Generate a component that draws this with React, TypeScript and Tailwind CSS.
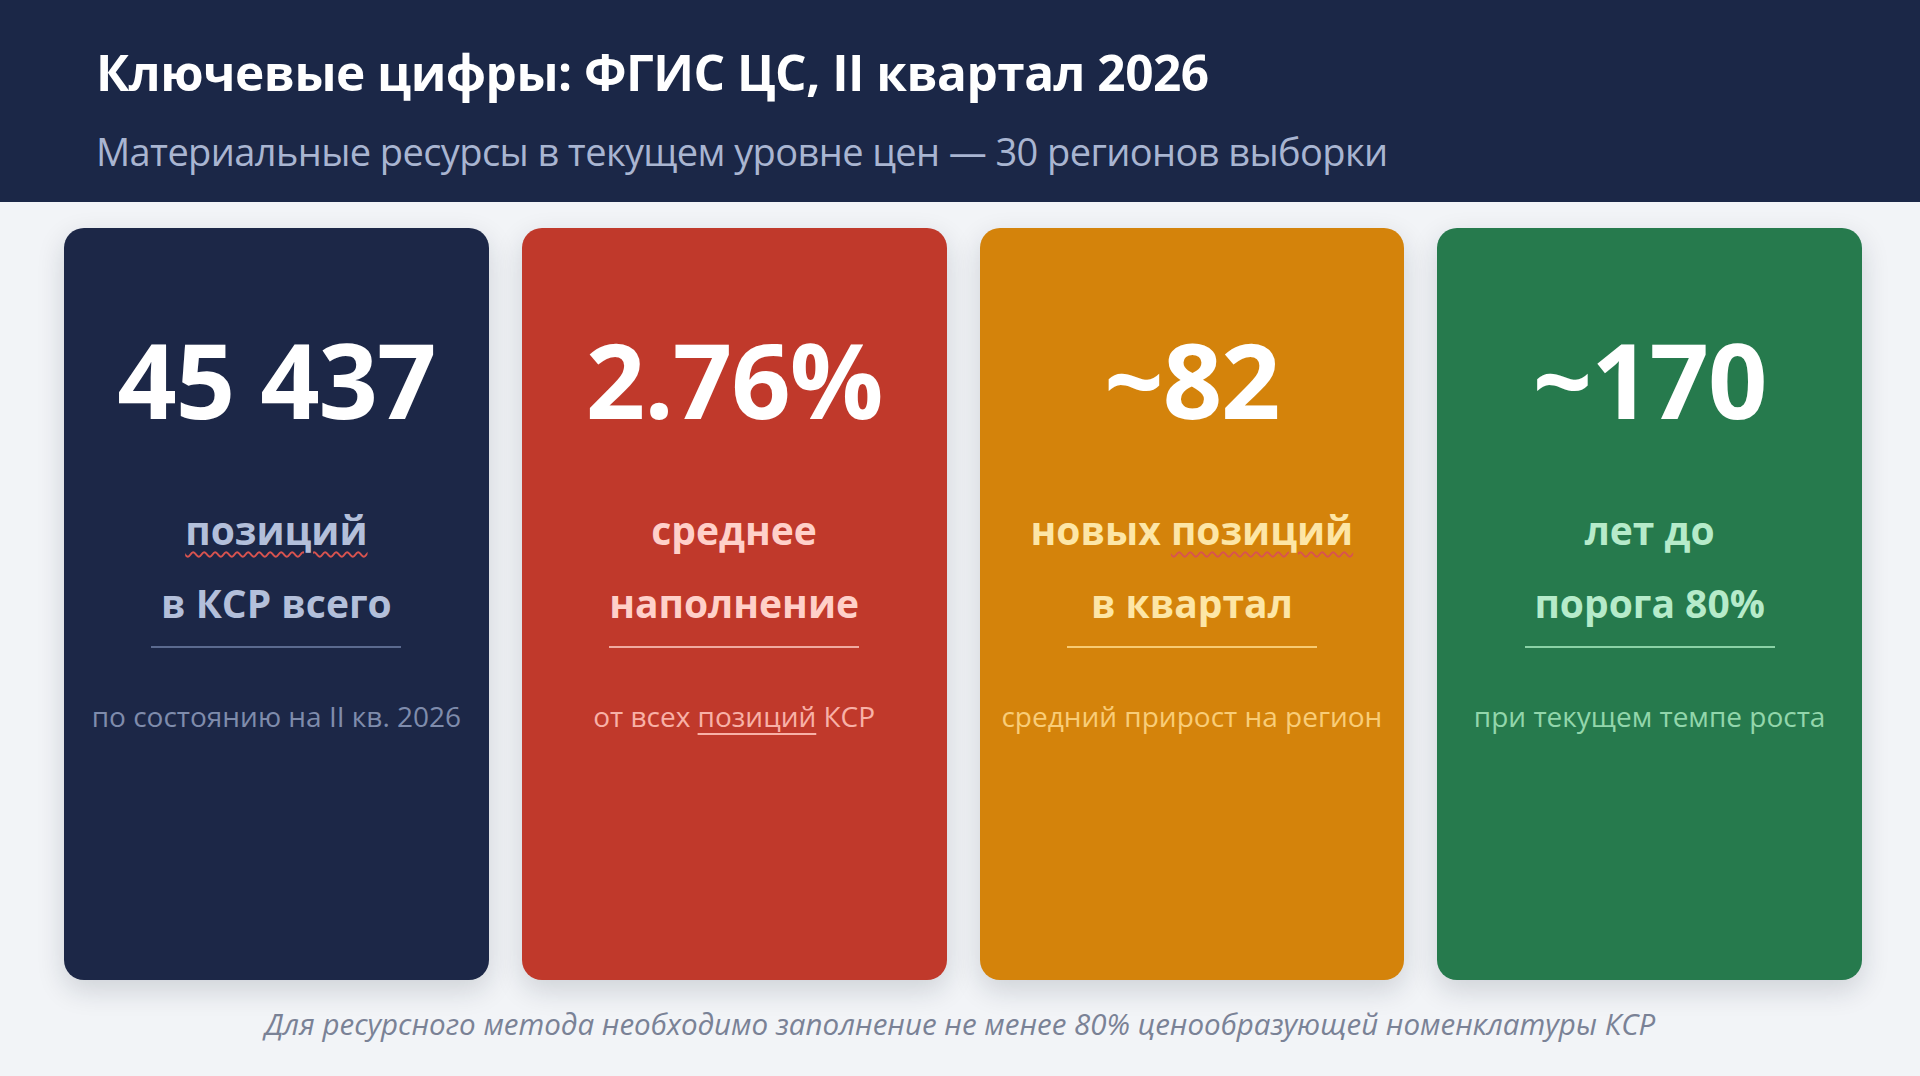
const cards = [
  {
    value: '45 437',
    line1: 'позиций',
    line2: 'в КСР всего',
    note: 'по состоянию на II кв. 2026',
    wavy: 'first',
    bg: 'bg-[#1c2747]',
    label: 'text-[#b3bfda]',
    rule: 'bg-[#5b6a8f]',
    sub: 'text-[#7f8cac]',
  },
  {
    value: '2.76%',
    line1: 'среднее',
    line2: 'наполнение',
    note: 'от всех позиций КСР',
    wavy: 'note',
    bg: 'bg-[#c0392b]',
    label: 'text-[#ffd0c9]',
    rule: 'bg-[#f0aaa0]',
    sub: 'text-[#f8b1a7]',
  },
  {
    value: '~82',
    line1: 'новых позиций',
    line2: 'в квартал',
    note: 'средний прирост на регион',
    wavy: 'first',
    bg: 'bg-[#d4830b]',
    label: 'text-[#fde6a6]',
    rule: 'bg-[#f8cb72]',
    sub: 'text-[#f9cd78]',
  },
  {
    value: '~170',
    line1: 'лет до',
    line2: 'порога 80%',
    note: 'при текущем темпе роста',
    wavy: 'none',
    bg: 'bg-[#267a4d]',
    label: 'text-[#b6ebca]',
    rule: 'bg-[#8ad2a6]',
    sub: 'text-[#92d6ab]',
  },
];

// spellchecker-style underline under "позиций"
function Marked({ text, tone }: { text: string; tone: string }) {
  const i = text.indexOf('позиций');
  if (i < 0) return <>{text}</>;
  return (
    <>
      {text.slice(0, i)}
      <span className={`underline underline-offset-[6px] decoration-[1.5px] ${tone}`}>позиций</span>
      {text.slice(i + 7)}
    </>
  );
}

function StatCard({ card }: { card: (typeof cards)[number] }) {
  return (
    <div className={`flex-1 h-[752px] rounded-[20px] ${card.bg} shadow-[0_10px_28px_rgba(20,30,50,0.16)] flex flex-col items-center`}>
      <div className="pt-[99px] text-[104px] leading-none font-bold text-white tracking-[-1px]">{card.value}</div>
      <div className={`mt-[62px] text-[39px] leading-[73px] font-bold text-center ${card.label}`}>
        <div>
          {card.wavy === 'first' ? (
            <Marked text={card.line1} tone="decoration-wavy decoration-[#d9534f]" />
          ) : (
            card.line1
          )}
        </div>
        <div>{card.line2}</div>
      </div>
      <div className={`mt-[7px] w-[250px] h-[1.5px] ${card.rule}`} />
      <div className={`mt-[54px] text-[28px] leading-none ${card.sub}`}>
        {card.wavy === 'note' ? <Marked text={card.note} tone="decoration-[#f8b1a7]" /> : card.note}
      </div>
    </div>
  );
}

export default function App() {
  return (
    <div
      className="w-full h-[1076px] bg-[#f2f4f7] flex flex-col overflow-hidden"
      style={{ fontFamily: '"Open Sans", "Noto Sans", sans-serif' }}
    >
      <header className="h-[202px] bg-[#1b2747] pl-[96px] pt-[48px] flex flex-col">
        <h1 className="text-[49.5px] leading-none font-bold text-white tracking-[-0.5px]">
          Ключевые цифры: ФГИС ЦС, II квартал 2026
        </h1>
        <p className="mt-[34px] text-[38px] leading-none text-[#a9b5d1] tracking-[-0.6px]">
          Материальные ресурсы в текущем уровне цен — 30 регионов выборки
        </p>
      </header>

      <main className="pl-16 pr-[58px] pt-[26px] flex gap-[33px]">
        {cards.map((card) => (
          <StatCard key={card.value} card={card} />
        ))}
      </main>

      <footer className="mt-[29px] text-center text-[29.5px] leading-none italic text-[#7a8296]">
        Для ресурсного метода необходимо заполнение не менее 80% ценообразующей номенклатуры КСР
      </footer>
    </div>
  );
}
